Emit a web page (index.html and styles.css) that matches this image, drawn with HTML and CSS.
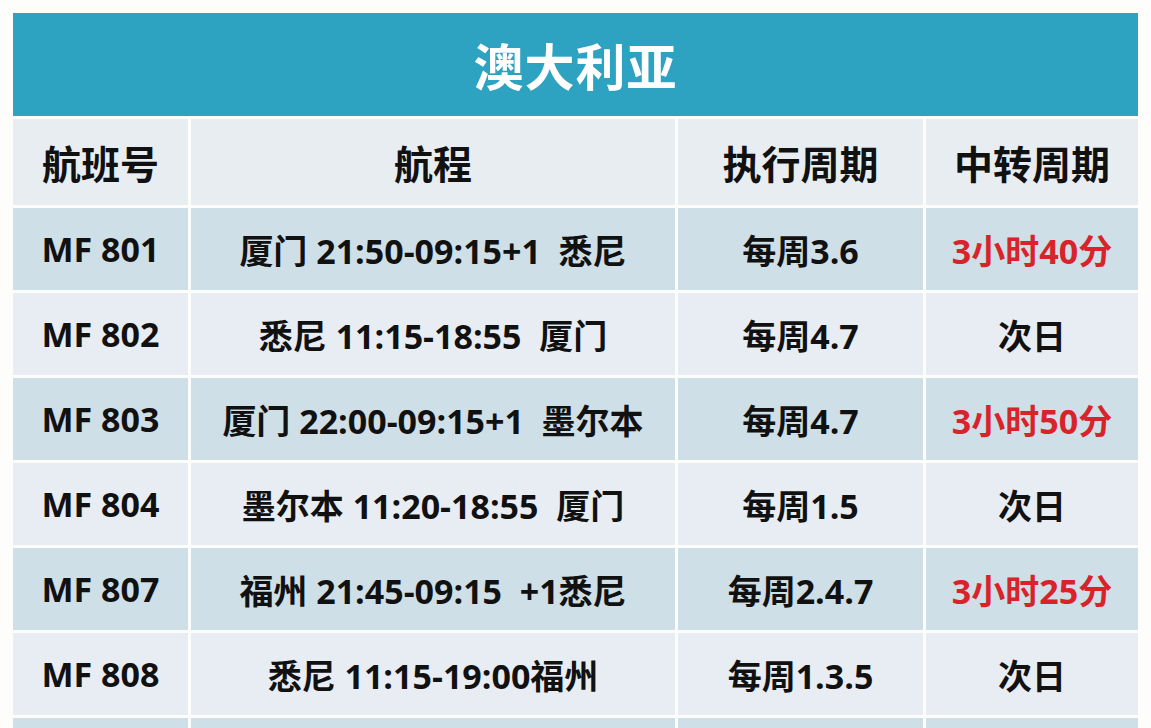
FILE: index.html
```html
<!DOCTYPE html>
<html lang="zh-CN">
<head>
<meta charset="utf-8">
<title>澳大利亚航班</title>
<link rel="stylesheet" href="styles.css">
</head>
<body>
<div class="sheet">
  <div class="title">澳大利亚</div>
  <div class="cell head">航班号</div>
  <div class="cell head">航程</div>
  <div class="cell head">执行周期</div>
  <div class="cell head">中转周期</div>

  <div class="cell odd">MF 801</div>
  <div class="cell odd">厦门 21:50-09:15+1&nbsp; 悉尼</div>
  <div class="cell odd">每周3.6</div>
  <div class="cell odd red">3小时40分</div>

  <div class="cell even">MF 802</div>
  <div class="cell even">悉尼 11:15-18:55&nbsp; 厦门</div>
  <div class="cell even">每周4.7</div>
  <div class="cell even">次日</div>

  <div class="cell odd">MF 803</div>
  <div class="cell odd">厦门 22:00-09:15+1&nbsp; 墨尔本</div>
  <div class="cell odd">每周4.7</div>
  <div class="cell odd red">3小时50分</div>

  <div class="cell even">MF 804</div>
  <div class="cell even">墨尔本 11:20-18:55&nbsp; 厦门</div>
  <div class="cell even">每周1.5</div>
  <div class="cell even">次日</div>

  <div class="cell odd">MF 807</div>
  <div class="cell odd">福州 21:45-09:15&nbsp; +1悉尼</div>
  <div class="cell odd">每周2.4.7</div>
  <div class="cell odd red">3小时25分</div>

  <div class="cell even">MF 808</div>
  <div class="cell even">悉尼 11:15-19:00福州</div>
  <div class="cell even">每周1.3.5</div>
  <div class="cell even">次日</div>

  <div class="cell odd"></div>
  <div class="cell odd"></div>
  <div class="cell odd"></div>
  <div class="cell odd"></div>
</div>
</body>
</html>
```
FILE: styles.css
```css
html, body {
  margin: 0;
  padding: 0;
  background: #fdfdfb;
  overflow: hidden;
}
body {
  padding: 13px 0 0 13px;
  font-family: "Open Sans", "Noto Sans CJK SC", sans-serif;
  font-weight: 700;
  color: #111;
}
.sheet {
  display: grid;
  grid-template-columns: 175px 484px 245px 212px;
  grid-template-rows: 103px 86px repeat(6, 82px) 10px;
  gap: 3px;
  width: 1125px;
}
.title {
  grid-column: 1 / -1;
  background: #2ea2c1;
  color: #fff;
  font-size: 50px;
  display: flex;
  align-items: center;
  justify-content: center;
  letter-spacing: 1px;
}
.cell {
  display: flex;
  align-items: center;
  justify-content: center;
  font-size: 34px;
  white-space: nowrap;
  overflow: hidden;
}
.head {
  background: #e8edf2;
  font-size: 39px;
}
.odd { background: #cfdfe7; }
.even { background: #e8ecf3; }
.red { color: #d9232a; }
```
